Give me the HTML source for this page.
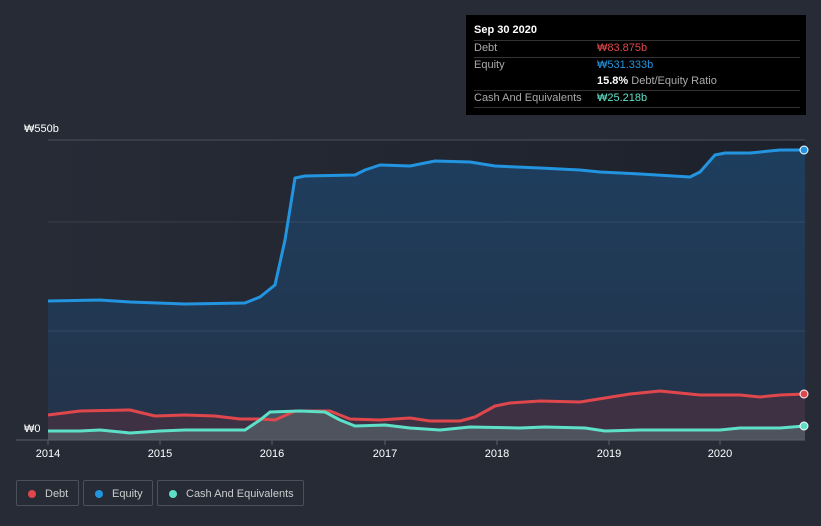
<!DOCTYPE html>
<html><head><meta charset="utf-8"><style>
body{margin:0;width:821px;height:526px;background:#262b36;font-family:"Liberation Sans","Noto Sans CJK KR",sans-serif;overflow:hidden;position:relative}
.tt{position:absolute;left:466px;top:15px;width:340px;height:100px;background:#000;color:#fff;font-size:11px}
.tt .r{position:absolute;left:8px;width:326px;border-top:1px solid #333}
.tt span{position:absolute}
.lg{position:absolute;top:480px;height:26px;border:1px solid #4b505a;border-radius:2px;color:#ccc;font-size:11px;line-height:26px;box-sizing:border-box}
.lg i{position:absolute;left:11px;top:9px;width:8px;height:8px;border-radius:50%}
</style></head><body>
<svg width="821" height="526" style="position:absolute;left:0;top:0">
<defs>
<linearGradient id="bg" x1="0" x2="1" y1="0" y2="0"><stop offset="0" stop-color="#262b36"/><stop offset="1" stop-color="#1d212b"/></linearGradient>
<linearGradient id="eq" x1="0" x2="0" y1="0" y2="1"><stop offset="0" stop-color="#1e3e5e"/><stop offset="1" stop-color="#243349"/></linearGradient>
</defs>
<rect x="48" y="140" width="757" height="300" fill="url(#bg)"/>
<path d="M48,301 L100,300 130,302 185,304 245,303 260,297 275,285 285,240 295,178 305,176 355,175 365,170 380,165 410,166 435,161 470,162 495,166 540,168 580,170 600,172 640,174 690,177 700,172 715,155 725,153 750,153 780,150 805,150 L805,440 48,440Z" fill="url(#eq)"/>
<path d="M48,415 L80,411 130,410 155,416 185,415 215,416 240,419 260,419 275,420 295,411 330,411 350,419 380,420 410,418 430,421 460,421 475,417 495,406 510,403 540,401 580,402 605,398 630,394 660,391 680,393 700,395 740,395 760,397 780,395 805,394 L805,440 48,440Z" fill="#4a3040" opacity="0.7"/>
<path d="M48,431 L80,431 100,430 130,433 160,431 185,430 245,430 260,420 270,412 300,411 325,412 340,420 355,426 385,425 410,428 440,430 470,427 520,428 545,427 585,428 605,431 640,430 680,430 720,430 740,428 780,428 805,426 L805,440 48,440Z" fill="#5a6a70" opacity="0.6"/>
<line x1="48" y1="140" x2="805" y2="140" stroke="#4a4f5a"/>
<line x1="48" y1="222" x2="805" y2="222" stroke="#ffffff" stroke-opacity="0.09"/>
<line x1="48" y1="331" x2="805" y2="331" stroke="#ffffff" stroke-opacity="0.09"/>
<path d="M48,301 L100,300 130,302 185,304 245,303 260,297 275,285 285,240 295,178 305,176 355,175 365,170 380,165 410,166 435,161 470,162 495,166 540,168 580,170 600,172 640,174 690,177 700,172 715,155 725,153 750,153 780,150 805,150" fill="none" stroke="#2394df" stroke-width="3" stroke-linejoin="round"/>
<path d="M48,415 L80,411 130,410 155,416 185,415 215,416 240,419 260,419 275,420 295,411 330,411 350,419 380,420 410,418 430,421 460,421 475,417 495,406 510,403 540,401 580,402 605,398 630,394 660,391 680,393 700,395 740,395 760,397 780,395 805,394" fill="none" stroke="#e0474c" stroke-width="3" stroke-linejoin="round"/>
<path d="M48,431 L80,431 100,430 130,433 160,431 185,430 245,430 260,420 270,412 300,411 325,412 340,420 355,426 385,425 410,428 440,430 470,427 520,428 545,427 585,428 605,431 640,430 680,430 720,430 740,428 780,428 805,426" fill="none" stroke="#5ee0c8" stroke-width="3" stroke-linejoin="round"/>
<line x1="16" y1="440" x2="805" y2="440" stroke="#5a5f6a"/>
<g stroke="#5a5f6a"><line x1="48" y1="440" x2="48" y2="445"/><line x1="160" y1="440" x2="160" y2="445"/><line x1="272" y1="440" x2="272" y2="445"/><line x1="385" y1="440" x2="385" y2="445"/><line x1="497" y1="440" x2="497" y2="445"/><line x1="609" y1="440" x2="609" y2="445"/><line x1="720" y1="440" x2="720" y2="445"/></g>
<circle cx="804" cy="150" r="4" fill="#2394df" stroke="#fff" stroke-width="1"/>
<circle cx="804" cy="394" r="4" fill="#e0474c" stroke="#fff" stroke-width="1"/>
<circle cx="804" cy="426" r="4" fill="#5ee0c8" stroke="#fff" stroke-width="1"/>
<g fill="#fff" font-size="11" font-family="Liberation Sans, Noto Sans CJK KR, sans-serif">
<text x="24" y="132">₩550b</text><text x="24" y="432">₩0</text>
<g text-anchor="middle"><text x="48" y="457">2014</text><text x="160" y="457">2015</text><text x="272" y="457">2016</text><text x="385" y="457">2017</text><text x="497" y="457">2018</text><text x="609" y="457">2019</text><text x="720" y="457">2020</text></g>
</g>
</svg>
<div class="tt">
<span style="left:8px;top:9px;font-weight:bold">Sep 30 2020</span>
<div class="r" style="top:25px"></div>
<span style="left:8px;top:27px;color:#aaa">Debt</span><span style="left:131px;top:27px;color:#e0474c">₩83.875b</span>
<div class="r" style="top:42px"></div>
<span style="left:8px;top:44px;color:#aaa">Equity</span><span style="left:131px;top:44px;color:#2394df">₩531.333b</span>
<span style="left:131px;top:60px"><b>15.8%</b> <span style="position:static;color:#aaa">Debt/Equity Ratio</span></span>
<div class="r" style="top:75px"></div>
<span style="left:8px;top:77px;color:#aaa">Cash And Equivalents</span><span style="left:131px;top:77px;color:#5ee0c8">₩25.218b</span>
<div class="r" style="top:92px"></div>
</div>
<div class="lg" style="left:16px;width:63px"><i style="background:#e0474c"></i><span style="position:absolute;left:28px">Debt</span></div>
<div class="lg" style="left:83px;width:70px"><i style="background:#2394df"></i><span style="position:absolute;left:28px">Equity</span></div>
<div class="lg" style="left:157px;width:147px"><i style="background:#5ee0c8"></i><span style="position:absolute;left:28px">Cash And Equivalents</span></div>
</body></html>
